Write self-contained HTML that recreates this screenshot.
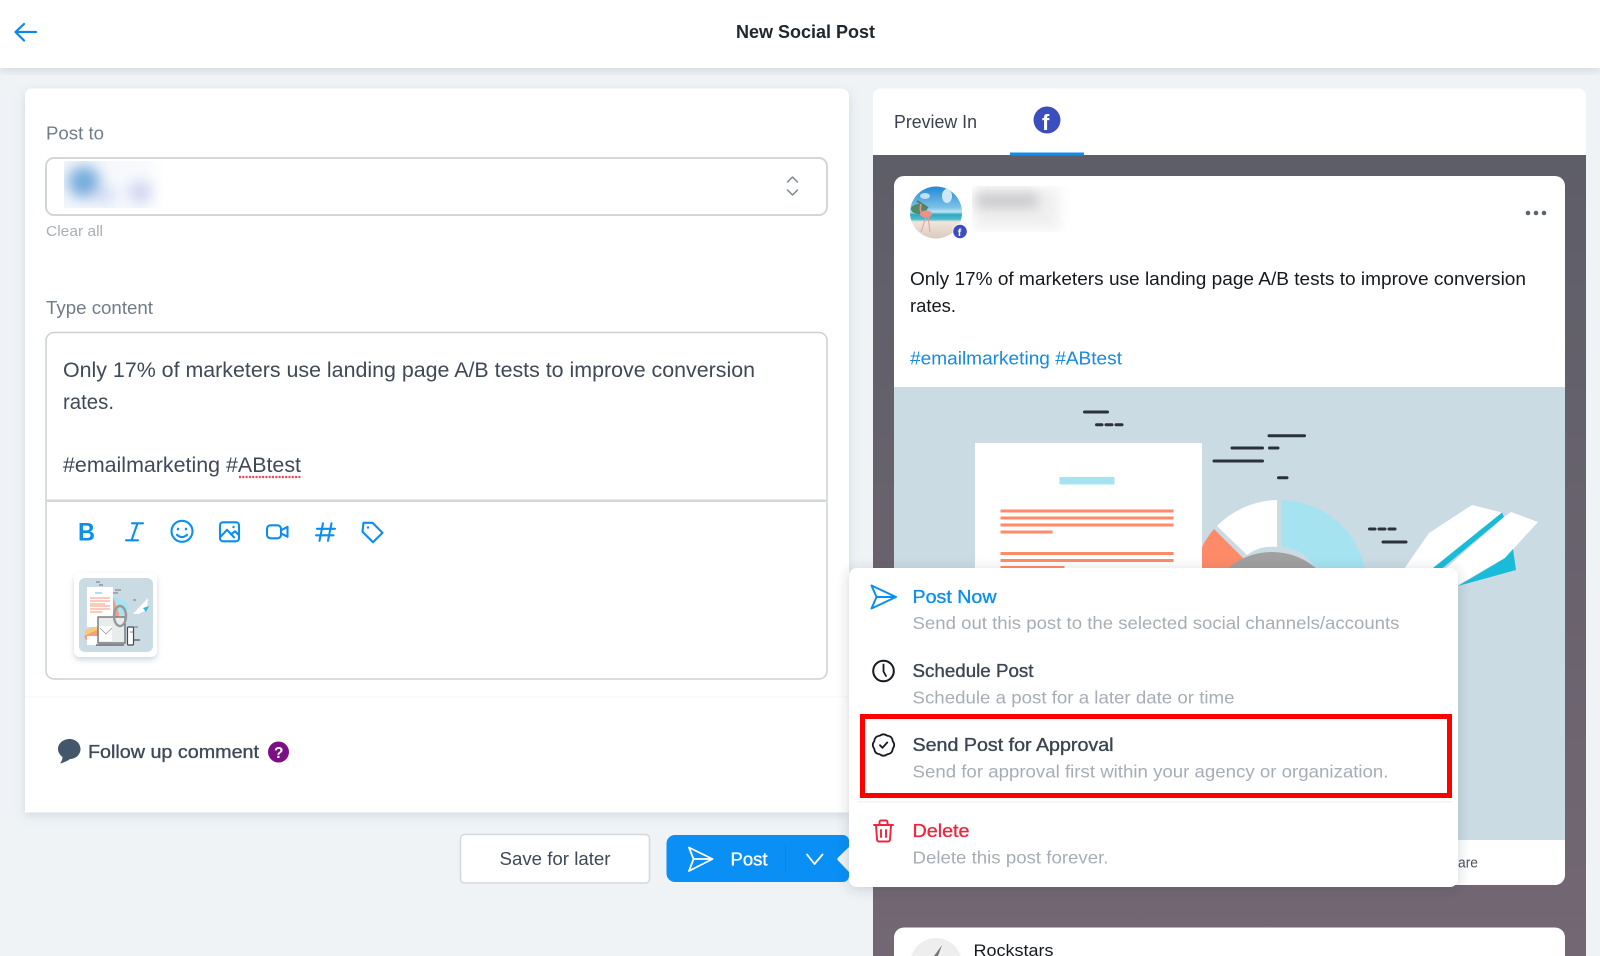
<!DOCTYPE html>
<html lang="en">
<head>
<meta charset="utf-8">
<title>New Social Post</title>
<style>
html,body{margin:0;padding:0;background:#eff3f6;width:1600px;height:956px;overflow:hidden}
svg{display:block}
text{font-family:"Liberation Sans",sans-serif}
.m{stroke:currentColor;stroke-width:.35}
.ic{fill:none;stroke:#0a8ef0;stroke-width:2.1;stroke-linecap:round;stroke-linejoin:round}
.d{stroke:#2b3138;stroke-width:3;stroke-linecap:round}
.o{fill:#ff8a68}
</style>
</head>
<body>
<svg width="1600" height="956" viewBox="0 0 1600 956" xmlns="http://www.w3.org/2000/svg">
<defs>
<filter id="sh1" x="-5%" y="-5%" width="110%" height="115%"><feDropShadow dx="0" dy="3" stdDeviation="5" flood-color="#6b7a8a" flood-opacity=".22"/></filter>
<filter id="sh2" x="-10%" y="-10%" width="120%" height="120%"><feDropShadow dx="0" dy="2" stdDeviation="6" flood-color="#3a4450" flood-opacity=".22"/></filter>
<filter id="sh3" x="-30%" y="-30%" width="160%" height="160%"><feDropShadow dx="0" dy="3" stdDeviation="3" flood-color="#6b7a8a" flood-opacity=".3"/></filter>
<filter id="b8" x="-50%" y="-50%" width="200%" height="200%"><feGaussianBlur stdDeviation="7"/></filter>
<filter id="b5" x="-30%" y="-80%" width="160%" height="260%"><feGaussianBlur stdDeviation="6"/></filter>
<linearGradient id="pg" x1="0" y1="0" x2="0" y2="1"><stop offset="0" stop-color="#5e5e68"/><stop offset="1" stop-color="#736773"/></linearGradient>
<linearGradient id="sea" x1="0" y1="0" x2="0" y2="1"><stop offset="0" stop-color="#1f86d2"/><stop offset=".4" stop-color="#7cc2e8"/><stop offset=".48" stop-color="#bfe3ee"/><stop offset=".53" stop-color="#2ba9c4"/><stop offset=".62" stop-color="#57bccb"/><stop offset=".66" stop-color="#f0e6dc"/><stop offset="1" stop-color="#d8c8be"/></linearGradient>
<linearGradient id="wash" x1="0" y1="0" x2="1" y2="0"><stop offset="0" stop-color="#f3f6fb"/><stop offset=".8" stop-color="#f8fafd"/><stop offset="1" stop-color="#ffffff"/></linearGradient>
<clipPath id="av"><circle cx="936" cy="212.500" r="26"/></clipPath>
<clipPath id="ill"><rect x="894" y="387" width="671" height="453"/></clipPath>
<clipPath id="rocks"><rect x="894" y="927" width="671" height="29"/></clipPath>
<clipPath id="thumb"><rect x="79" y="578" width="74" height="74" rx="6"/></clipPath>
<clipPath id="selb"><rect x="64" y="161" width="100" height="47"/></clipPath>
<clipPath id="nameb"><rect x="972" y="186" width="105" height="46"/></clipPath>
</defs>

<!-- page -->
<rect width="1600" height="956" fill="#eff3f6"/>

<!-- header -->
<rect x="0" y="0" width="1600" height="68" fill="#fff" filter="url(#sh1)"/>
<path d="M15.500 32H36M24 24L15.500 32L24 40.500" fill="none" stroke="#0f85e6" stroke-width="2.200" stroke-linecap="round" stroke-linejoin="round"/>
<text x="736" y="38" font-size="18" font-weight="700" fill="#20262e" textLength="139" lengthAdjust="spacingAndGlyphs">New Social Post</text>

<!-- left card -->
<path d="M32 88.500H841a8 8 0 0 1 8 8V812.500H25V95.500a7 7 0 0 1 7-7Z" fill="#fff" filter="url(#sh1)"/>
<text x="46" y="139.500" font-size="18" fill="#727c88" textLength="58" lengthAdjust="spacingAndGlyphs">Post to</text>
<rect x="46" y="158" width="781" height="57" rx="8" fill="#fff" stroke="#d2d6db" stroke-width="2"/>
<g clip-path="url(#selb)">
<rect x="64" y="161" width="100" height="47" fill="url(#wash)"/>
<g filter="url(#b8)"><ellipse cx="84" cy="182" rx="16" ry="16" fill="#74abdc"/><ellipse cx="104" cy="195" rx="12" ry="8" fill="#d0daf3"/><ellipse cx="140" cy="192" rx="12" ry="11" fill="#cfd2f0"/></g>
</g>
<path d="M787.500 182L792.500 177L797.500 182M787.500 190L792.500 195L797.500 190" fill="none" stroke="#7d8792" stroke-width="1.500" stroke-linecap="round" stroke-linejoin="round"/>
<text x="46" y="236" font-size="15" fill="#a9afb7" textLength="57" lengthAdjust="spacingAndGlyphs">Clear all</text>
<text x="46" y="314" font-size="18" fill="#727c88" textLength="107" lengthAdjust="spacingAndGlyphs">Type content</text>
<rect x="46" y="332.500" width="781" height="346.500" rx="8" fill="#fff" stroke="#cbd0d7" stroke-width="1.500"/>
<text x="63" y="377" font-size="21" fill="#3f4957" textLength="692" lengthAdjust="spacingAndGlyphs">Only 17% of marketers use landing page A/B tests to improve conversion</text>
<text x="63" y="409" font-size="21" fill="#3f4957" textLength="51" lengthAdjust="spacingAndGlyphs">rates.</text>
<text x="63" y="472" font-size="21" fill="#3f4957" textLength="238" lengthAdjust="spacingAndGlyphs">#emailmarketing #ABtest</text>
<path d="M239 477H301" stroke="#f2444f" stroke-width="2.200" stroke-dasharray="2 1.300"/>
<rect x="47" y="499.500" width="779" height="2.500" fill="#d2d6db"/>

<!-- toolbar -->
<g transform="translate(0 -.7)">
<text x="78" y="541" font-size="25" font-weight="700" fill="#0a8ef0" textLength="17" lengthAdjust="spacingAndGlyphs">B</text>
<path class="ic" d="M132 524H143M137.500 524L131.500 541M126 541H138" stroke-width="1.600"/>
<g class="ic"><circle cx="182" cy="532" r="10.500"/><path d="M177 535.500Q182 540 187 535.500"/><path d="M178 529.500v.4M186 529.500v.4" stroke-width="2.400"/></g>
<g class="ic"><rect x="220" y="523" width="19" height="19" rx="3"/><path d="M221 537L227 530.500L234 538M231 535L235 532L239 536"/><path d="M233.500 527.500v.4" stroke-width="2.200"/></g>
<g class="ic"><rect x="267" y="526" width="14" height="13" rx="3.500"/><path d="M281 531L287.500 527.500V537.500L281 534"/></g>
<path class="ic" stroke-width="2.400" d="M323 524L319.500 541.500M331.500 524L328 541.500M317 529.500H335M316 536H333.500"/>
<g class="ic"><path d="M363.500 523.500H372.500L382.500 533.500L373 543L362.500 532.500Z"/><path d="M368 528v.3" stroke-width="2.200"/></g>
</g>

<!-- thumbnail -->
<rect x="74" y="573" width="83" height="84" rx="6" fill="#fff" filter="url(#sh3)"/>
<g clip-path="url(#thumb)">
<rect x="79" y="578" width="74" height="74" fill="#cbdbe4"/>
<rect x="87" y="587" width="26" height="40" fill="#fff"/>
<rect x="95" y="592" width="7" height="2" fill="#a5e3f1"/>
<path d="M90 598H110M90 601H110M90 604H105M90 606H110M90 609H110M90 612H102" stroke="#ffb9a5" stroke-width="1.500"/>
<path d="M113 597L124 610L113 622Z" fill="#ff9a7f"/><path d="M113 597Q123 597 130 608L120 616Z" fill="#a8e3f1"/>
<path d="M133 614L148 598L147 610L138 614Z" fill="#fff"/><path d="M143 608L149 606L146 612Z" fill="#2dbbd4"/>
<path d="M85 630L112 622L118 636L85 640Z" fill="#f4ce72"/><path d="M84 636L104 627L110 640L86 640Z" fill="#ff9a7f"/>
<rect x="87" y="636" width="12" height="9" fill="#fff"/>
<rect x="98" y="617" width="27" height="26" fill="#e9ecec" stroke="#75767a" stroke-width="1.400"/>
<path d="M99 626H112V641H99Z" fill="#fff"/><path d="M100 628L106 634L112 628" fill="none" stroke="#999" stroke-width=".8"/>
<ellipse cx="120" cy="616" rx="6" ry="10" fill="none" stroke="#96999c" stroke-width="2.400"/>
<rect x="127.500" y="627" width="6" height="18" rx="1" fill="#fff" stroke="#45484c" stroke-width="1.200"/>
<path d="M96 645H124M134 640H140" stroke="#6a6c70" stroke-width="1.500"/>
<path d="M96 582h4M99 585h4M115 590h6M113 593h5M133 600h3M133 627h5M130 632h3" stroke="#555" stroke-width=".8"/>
</g>

<!-- follow up -->
<rect x="25" y="696" width="824" height="1.500" fill="#f9fafb"/>
<path d="M69.500 739C75.800 739 80.500 743.500 80.500 749S75.800 759 70 759C67.500 761 64 762.500 60 763.500C61.500 761.500 62.500 759.500 62.500 757C59.800 755 58 752 58 749C58 743.500 63.200 739 69.500 739Z" fill="#44566a"/>
<text x="88" y="758" font-size="18.500" fill="#3f4957" class="m" textLength="171" lengthAdjust="spacingAndGlyphs" style="color:#3f4957">Follow up comment</text>
<circle cx="278.500" cy="752" r="10.500" fill="#7d0f85"/>
<text x="274" y="758" font-size="15.500" font-weight="700" fill="#fff">?</text>

<!-- buttons -->
<rect x="460.500" y="834.500" width="189" height="48.500" rx="4" fill="#fff" stroke="#d4d8dd" stroke-width="1.500"/>
<text x="499.500" y="865" font-size="18.500" fill="#3f4957" textLength="111" lengthAdjust="spacingAndGlyphs">Save for later</text>
<path d="M675 835H843a6 6 0 0 1 6 6V847L838 857.500Q836.800 859 838 860.500L849 872V876a6 6 0 0 1-6 6H675a8.500 8.500 0 0 1-8.500-8.500V843.500A8.500 8.500 0 0 1 675 835Z" fill="#0a8ff5"/>
<path d="M689 847.500L712.500 859L689 871L693.500 859ZM693.500 859H712.500" fill="none" stroke="#fff" stroke-width="1.800" stroke-linejoin="round"/>
<text x="730.500" y="865.500" font-size="18.500" fill="#fff" class="m" textLength="37" lengthAdjust="spacingAndGlyphs" style="color:#fff">Post</text>
<rect x="785" y="846" width="1" height="26" fill="#2a76bd" opacity=".7"/>
<path d="M807 854.500L814.500 864L822.500 854.500" fill="none" stroke="#fff" stroke-width="1.800" stroke-linecap="round" stroke-linejoin="round"/>

<!-- right panel -->
<path d="M881 88.500H1578a8 8 0 0 1 8 8V155H873V96.500a8 8 0 0 1 8-8Z" fill="#fff"/>
<rect x="873" y="155" width="713" height="801" fill="url(#pg)"/>
<text x="894" y="128" font-size="18.500" fill="#39424e" textLength="83" lengthAdjust="spacingAndGlyphs">Preview In</text>
<circle cx="1047" cy="120" r="13.500" fill="#3c4dbd"/>
<text x="1042" y="130" font-size="22" font-weight="700" fill="#fff">f</text>
<rect x="1010" y="152.500" width="74" height="3" fill="#0a8ef0"/>

<!-- post card -->
<rect x="894" y="176" width="671" height="709" rx="10" fill="#fff"/>
<g clip-path="url(#av)">
<rect x="910" y="186" width="52" height="54" fill="url(#sea)"/>
<ellipse cx="947" cy="196" rx="5" ry="7" fill="#cfe8f6"/>
<ellipse cx="925" cy="196" rx="5" ry="3" fill="#bfe0f4"/>
<ellipse cx="919" cy="209" rx="8" ry="5" fill="#4f8a6a"/>
<path d="M917 201L928 208" stroke="#5a7a60" stroke-width="2"/>
<ellipse cx="926" cy="214" rx="6" ry="3.500" fill="#ef8f88"/>
<path d="M921 204Q919 212 923 214" fill="none" stroke="#ef8f88" stroke-width="1.600"/>
<path d="M926 217L921 232M928 217L930 232" stroke="#e89c92" stroke-width="1"/>
</g>
<circle cx="960" cy="231.500" r="7.500" fill="#fff"/>
<circle cx="960" cy="231.500" r="6.800" fill="#3c4dbd"/>
<text x="957.800" y="236" font-size="10.500" font-weight="700" fill="#fff">f</text>
<g clip-path="url(#nameb)">
<rect x="974" y="188" width="86" height="42" fill="#f0f0f1" filter="url(#b5)"/>
<rect x="976" y="193" width="62" height="15" fill="#c9c9cc" filter="url(#b5)"/>
</g>
<circle cx="1528" cy="213" r="2.300" fill="#5b6470"/><circle cx="1536" cy="213" r="2.300" fill="#5b6470"/><circle cx="1544" cy="213" r="2.300" fill="#5b6470"/>
<text x="910" y="285" font-size="18.500" fill="#15191e" textLength="616" lengthAdjust="spacingAndGlyphs">Only 17% of marketers use landing page A/B tests to improve conversion</text>
<text x="910" y="312" font-size="18.500" fill="#15191e" textLength="46" lengthAdjust="spacingAndGlyphs">rates.</text>
<text x="910" y="364.500" font-size="18.500" fill="#1689e0" textLength="212" lengthAdjust="spacingAndGlyphs">#emailmarketing #ABtest</text>

<!-- illustration -->
<g clip-path="url(#ill)">
<rect x="894" y="387" width="671" height="453" fill="#cbdbe4"/>
<path class="d" d="M1084.500 412H1107.500M1096.500 424.700H1102M1106 424.700H1112M1116 424.700H1122M1269 435.700H1304.500M1232 448H1262.500M1269.500 448H1278M1214 461H1262.500M1278.500 477.700H1287M1369.500 529H1375M1379 529H1385M1389 529H1395M1383 542H1406"/>
<path d="M1282 500A87 87 0 0 1 1367 587H1320A40 40 0 0 0 1282 547Z" fill="#a5e3f1"/>
<path d="M1277 500A87 87 0 0 0 1217 526L1247 555A40 40 0 0 1 1277 547Z" fill="#fff"/>
<path d="M1214 529A87 87 0 0 0 1193 587H1240A40 40 0 0 1 1244 559Z" fill="#ff8a68"/>
<circle cx="1272" cy="620" r="68" fill="#a0a0a0"/>
<rect x="975" y="443" width="227" height="200" fill="#fff"/>
<rect x="1059.500" y="477" width="55" height="7.500" fill="#a5e3f1"/>
<rect class="o" x="1000.500" y="509.500" width="173" height="3"/>
<rect class="o" x="1000.500" y="516.500" width="173" height="3"/>
<rect class="o" x="1000.500" y="523.500" width="173" height="3"/>
<rect class="o" x="1000.500" y="530.500" width="52" height="3"/>
<rect class="o" x="1000.500" y="552" width="173" height="3"/>
<rect class="o" x="1000.500" y="559" width="173" height="3"/>
<rect class="o" x="1000.500" y="566" width="64" height="3"/>
<path d="M1402 572L1429 533L1472 505L1502 512.500L1430 572Z" fill="#fff"/>
<path d="M1502 512.500L1504 517L1433 576L1428 572Z" fill="#18bcd8"/>
<path d="M1436 577L1504 517L1511 512L1538 522L1505 558L1458 585Z" fill="#fff"/>
<path d="M1505 558L1513 549L1516 570L1458 586Z" fill="#18bcd8"/>
</g>
<text x="1458" y="867.500" font-size="15" fill="#4a535e" textLength="20" lengthAdjust="spacingAndGlyphs">are</text>

<!-- rockstars card -->
<path d="M904 927.500H1555a10 10 0 0 1 10 10V956H894V937.500a10 10 0 0 1 10-10Z" fill="#fff"/>
<g clip-path="url(#rocks)"><circle cx="936" cy="964" r="26" fill="#eeeeee"/><path d="M934 956L942 945L938 956Z" fill="#777"/></g>
<text x="973.500" y="956" font-size="17" fill="#15191e" textLength="80" lengthAdjust="spacingAndGlyphs">Rockstars</text>

<!-- dropdown -->
<rect x="849" y="568" width="609" height="319" rx="8" fill="#fff" filter="url(#sh2)"/>
<path d="M871.500 585.500L896 597L871.500 608.500L876.500 597ZM876.500 597H896" fill="none" stroke="#0a8ef0" stroke-width="2" stroke-linejoin="round"/>
<text x="912.500" y="603" font-size="18.500" fill="#0a8ef0" class="m" textLength="84" lengthAdjust="spacingAndGlyphs" style="color:#0a8ef0">Post Now</text>
<text x="912.500" y="629" font-size="17.500" fill="#a6adb6" textLength="487" lengthAdjust="spacingAndGlyphs">Send out this post to the selected social channels/accounts</text>

<circle cx="883.500" cy="671" r="10.300" fill="none" stroke="#15191e" stroke-width="2"/>
<path d="M883.500 664.500V671.500L886 676" fill="none" stroke="#15191e" stroke-width="1.800" stroke-linecap="round" stroke-linejoin="round"/>
<text x="912.500" y="677" font-size="18.500" fill="#3b4552" class="m" textLength="121" lengthAdjust="spacingAndGlyphs" style="color:#3b4552">Schedule Post</text>
<text x="912.500" y="703.500" font-size="17.500" fill="#a6adb6" textLength="322" lengthAdjust="spacingAndGlyphs">Schedule a post for a later date or time</text>

<g transform="translate(883.500 745)" fill="none" stroke="#15191e" stroke-width="1.800" stroke-linejoin="round" stroke-linecap="round">
<path d="M9.240 3.830Q8.800 8.800 3.830 9.240Q0 12.200-3.830 9.240Q-8.800 8.800-9.240 3.830Q-12.200 0-9.240-3.830Q-8.800-8.800-3.830-9.240Q0-12.200 3.830-9.240Q8.800-8.800 9.240-3.830Q12.200 0 9.240 3.830Z"/>
<path d="M-3.500 0.200L-1 2.800L3.800-2.600"/>
</g>
<text x="912.500" y="751" font-size="18.500" fill="#3b4552" class="m" textLength="201" lengthAdjust="spacingAndGlyphs" style="color:#3b4552">Send Post for Approval</text>
<text x="912.500" y="777.500" font-size="17.500" fill="#a6adb6" textLength="476" lengthAdjust="spacingAndGlyphs">Send for approval first within your agency or organization.</text>

<rect x="858" y="801" width="594" height="1.500" fill="#f2f3f5"/>
<path d="M874 825H893M879.500 825V822A1.500 1.500 0 0 1 881 820.500H886A1.500 1.500 0 0 1 887.500 822V825M876 825L877 839.500A2 2 0 0 0 879 841.500H888A2 2 0 0 0 890 839.500L891 825M881 830V837M886 830V837" fill="none" stroke="#f0243d" stroke-width="1.900" stroke-linecap="round" stroke-linejoin="round"/>
<text x="912.500" y="837" font-size="18.500" fill="#f0243d" class="m" textLength="57" lengthAdjust="spacingAndGlyphs" style="color:#f0243d">Delete</text>
<text x="912.500" y="863.500" font-size="17.500" fill="#a6adb6" textLength="196" lengthAdjust="spacingAndGlyphs">Delete this post forever.</text>

<!-- red highlight -->
<rect x="862.500" y="716.500" width="587" height="79" fill="none" stroke="#ff0000" stroke-width="5"/>
</svg>
</body>
</html>
